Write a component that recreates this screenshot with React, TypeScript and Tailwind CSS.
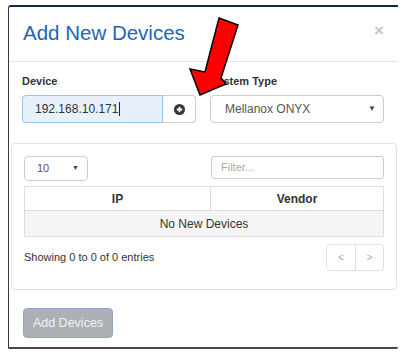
import React from 'react';

const App: React.FC = () => {
  return (
    <div className="relative w-[407px] h-[354px] bg-white overflow-hidden text-[#333]" style={{ fontFamily: '"Liberation Sans", Arial, sans-serif' }}>
      {/* Modal frame */}
      <div className="ml-[8px] mt-[5px] w-[390px] h-[344px] border-t-2 border-t-[#10284a] border-l border-l-[#3a3a3a] border-b-2 border-b-[#484848] rounded-tl-[3px] rounded-br-[2px] flex flex-col">
        {/* Header */}
        <div className="h-[55px] shrink-0 pt-[11px] pl-[14px] pr-[14px] flex justify-between items-start border-b border-[#e5e5e5]">
          <h2 className="text-[20.5px] leading-[30px] text-[#1b66b4]">Add New Devices</h2>
          <span className="text-[17px] leading-[17px] font-bold text-[#c4c4c4] mt-[4px]">×</span>
        </div>

        {/* Body */}
        <div className="pt-[12px]">
          <div className="px-[13px] flex gap-[14px]">
            <div className="w-[174px]">
              <label className="block text-[11px] leading-[15px] font-bold mb-[6px]">Device</label>
              <div className="flex h-[28px]">
                <div className="w-[141px] h-full bg-[#e8f0fc] border border-[#9ec0e6] rounded-l-[4px] flex items-center pl-[12px] text-[12px] text-[#333]">
                  192.168.10.171<span className="w-px h-[14px] bg-[#222] ml-[1px]" />
                </div>
                <div className="w-[33px] h-full border border-l-0 border-[#ccc] rounded-r-[4px] bg-white flex items-center justify-center">
                  <svg width="11" height="11" viewBox="0 0 12 12">
                    <circle cx="6" cy="6" r="6" fill="#333" />
                    <path d="M6 3v6M3 6h6" stroke="#fff" strokeWidth="2" />
                  </svg>
                </div>
              </div>
            </div>
            <div className="w-[174px]">
              <label className="block text-[11px] leading-[15px] font-bold mb-[6px]">System Type</label>
              <div className="h-[28px] border border-[#ccc] rounded-[4px] bg-white flex items-center justify-between pl-[14px] pr-[7px] text-[12px] text-[#555]">
                <span>Mellanox ONYX</span>
                <span className="text-[8px] text-[#444]">▼</span>
              </div>
            </div>
          </div>

          {/* Panel */}
          <div className="ml-[2px] mr-[1px] mt-[20px] h-[147px] border border-[#e3e3e3] rounded-[4px] px-[12px] pt-[12px]">
            <div className="flex justify-between items-start">
              <div className="w-[64px] h-[25px] border border-[#ccc] rounded-[4px] flex items-center justify-between pl-[12px] pr-[8px] text-[11px] text-[#555]">
                <span>10</span>
                <span className="text-[7px] text-[#444]">▼</span>
              </div>
              <div className="w-[173px] h-[23px] border border-[#ccc] rounded-[3px] flex items-center pl-[9px] text-[11px] text-[#aaa]">
                Filter...
              </div>
            </div>
            <div className="mt-[5px] border border-[#ddd] text-[12px]">
              <div className="flex h-[24px] font-bold border-b border-[#ddd]">
                <div className="w-[186px] border-r border-[#ddd] flex items-center justify-center">IP</div>
                <div className="flex-1 flex items-center justify-center">Vendor</div>
              </div>
              <div className="h-[25px] bg-[#f5f5f5] flex items-center justify-center text-[#333]">No New Devices</div>
            </div>
            <div className="mt-[7px] flex justify-between items-center">
              <span className="text-[11px] text-[#333]">Showing 0 to 0 of 0 entries</span>
              <div className="flex h-[27px] border border-[#e0e0e0] rounded-[4px] text-[10px] text-[#aaa]">
                <div className="w-[29px] flex items-center justify-center border-r border-[#e0e0e0]">&lt;</div>
                <div className="w-[27px] flex items-center justify-center">&gt;</div>
              </div>
            </div>
          </div>

          {/* Footer */}
          <div className="px-[14px] mt-[18px]">
            <button className="w-[90px] h-[30px] bg-[#adb1b6] border border-[#8ea6c2] rounded-[4px] text-[12.5px] text-[#f2f2f2]">
              Add Devices
            </button>
          </div>
        </div>
      </div>

      {/* Red arrow annotation */}
      <svg className="absolute left-0 top-0" width="407" height="354" viewBox="0 0 407 354">
        <polygon
          points="200,95 190,69 205,72 219,18 238,25 221,78 226,84"
          fill="#ff0000"
          stroke="#000"
          strokeWidth="1.5"
          strokeLinejoin="miter"
        />
      </svg>
    </div>
  );
};

export default App;
